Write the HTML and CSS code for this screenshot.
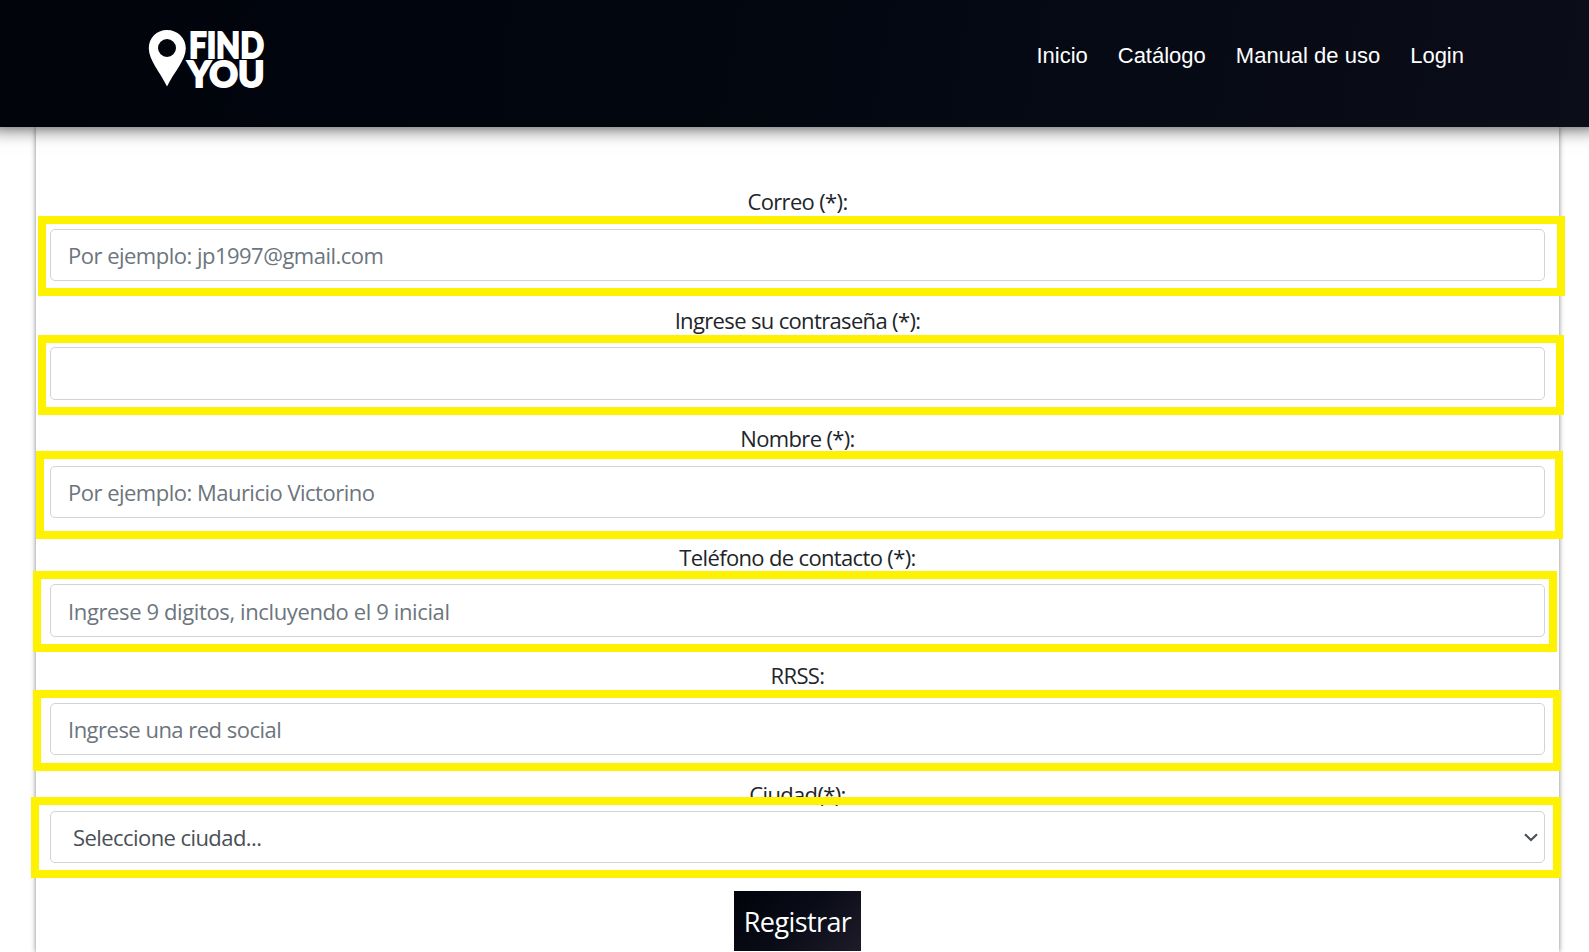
FILE: index.html
```html
<!DOCTYPE html>
<html lang="es">
<head>
<meta charset="utf-8">
<title>Find You - Registro</title>
<link rel="stylesheet" href="styles.css">
</head>
<body>
<header class="header">
  <a class="logo" href="#">
    <svg width="118" height="62" viewBox="0 0 118 62" fill="#fff">
      <path fill-rule="evenodd" d="M19 2C8.500 2 .8 10 .8 20.200C.8 32 12 44 19 58.500C26 44 37.800 32 37.800 20.200C37.800 10 29.500 2 19 2ZM19 11A9 9 0 1 1 19 29A9 9 0 1 1 19 11Z"/>
      <g class="logo-text">
        <text y="29.500" x="41" textLength="75" lengthAdjust="spacingAndGlyphs">FIND</text>
        <text y="58.500" x="39.500" textLength="77" lengthAdjust="spacingAndGlyphs">YOU</text>
      </g>
    </svg>
  </a>
  <nav class="nav">
    <a href="#">Inicio</a>
    <a href="#">Catálogo</a>
    <a href="#">Manual de uso</a>
    <a href="#">Login</a>
  </nav>
</header>
<main class="card">
  <form class="form">
    <div class="group"><label class="label">Correo (*):</label><input class="control" placeholder="Por ejemplo: jp1997@gmail.com"></div>
    <div class="group"><label class="label">Ingrese su contraseña (*):</label><input class="control" type="password"></div>
    <div class="group"><label class="label">Nombre (*):</label><input class="control" placeholder="Por ejemplo: Mauricio Victorino"></div>
    <div class="group"><label class="label">Teléfono de contacto (*):</label><input class="control control-phone" placeholder="Ingrese 9 digitos, incluyendo el 9 inicial"></div>
    <div class="group"><label class="label">RRSS:</label><input class="control" placeholder="Ingrese una red social"></div>
    <div class="group group-city"><label class="label">Ciudad(*):</label>
      <div class="control select"><span>Seleccione ciudad...</span>
        <svg width="14" height="9" viewBox="0 0 14 9" fill="none" stroke="#495057" stroke-width="2.200"><path d="M1 1.300L7 7L13 1.300"/></svg>
      </div>
    </div>
    <button class="submit" type="button">Registrar</button>
  </form>
</main>
<div class="mark mark-1"></div>
<div class="mark mark-2"></div>
<div class="mark mark-3"></div>
<div class="mark mark-4"></div>
<div class="mark mark-5"></div>
<div class="mark mark-6"></div>
</body>
</html>
```
FILE: styles.css
```css
* { box-sizing: border-box; }
html, body { height: 952px; overflow: hidden; }
body {
  margin: 0;
  position: relative;
  background: #fff;
  color: #212529;
  font-family: "Open Sans", "Noto Sans", sans-serif;
}
.header {
  position: relative;
  z-index: 2;
  height: 127px;
  padding: 28px 125px 0 148px;
  display: flex;
  justify-content: space-between;
  align-items: flex-start;
  background: linear-gradient(100deg, #01040b 0%, #02060f 45%, #060a15 70%, #0b0d18 100%);
  box-shadow: 0 -12px 18px 12px rgba(0, 0, 0, .8);
}
.logo { display: block; height: 62px; }
.logo svg { overflow: visible; }
.logo-text { font: 900 36.500px Lato, sans-serif; stroke: #fff; stroke-width: 1.900px; }
.nav { display: flex; gap: 30px; padding-top: 15px; }
.nav a {
  color: #fff;
  font: 22px/26px "Liberation Sans", Arial, sans-serif;
  text-decoration: none;
}
.card {
  height: 825px;
  margin: 0 30px 0 36px;
  padding: 61px 14px 0;
  background: #fff;
  box-shadow: 0 0 5px rgba(0, 0, 0, .5);
  clip-path: inset(0 -10px);
}
.form { display: flex; flex-direction: column; align-items: stretch; }
.group { display: flex; flex-direction: column; gap: 14.5px; margin-bottom: 25.5px; }
.label {
  font-size: 22px;
  line-height: 26px;
  text-align: center;
  letter-spacing: -.65px;
}
.control {
  width: 100%;
  height: 52.5px;
  margin: 0;
  padding: 1px 17px 0;
  border: 1px solid #ced4da;
  border-radius: 5px;
  background: #fff;
  color: #495057;
  font: 22px "Open Sans", "Noto Sans", sans-serif;
  letter-spacing: -.51px;
}
.control-phone { letter-spacing: -.38px; }
.control::placeholder { color: #6c757d; opacity: 1; }
.group-city { gap: 4px; margin-bottom: 27.5px; }
.select { display: flex; align-items: center; justify-content: space-between; padding: 1px 6px 0 22px; letter-spacing: -.57px; }
.submit {
  align-self: center;
  width: 127px;
  height: 60px;
  padding: 2px 0 0;
  border: 0;
  background: linear-gradient(135deg, #01030a 0%, #090c17 50%, #1f1b2a 100%);
  color: #fff;
  font: 27px "Open Sans", "Noto Sans", sans-serif;
  letter-spacing: -.6px;
}
/* Highlight frames drawn over the form fields */
.mark { position: absolute; z-index: 3; border: 8px solid #fff200; pointer-events: none; }
.mark-1 { left: 38px; top: 216px; width: 1527px; height: 80px; }
.mark-2 { left: 38px; top: 335px; width: 1526px; height: 80px; }
.mark-3 { left: 36px; top: 451px; width: 1527px; height: 88px; }
.mark-4 { left: 33px; top: 571px; width: 1524px; height: 81px; }
.mark-5 { left: 33px; top: 690px; width: 1528px; height: 81px; }
.mark-6 { left: 31px; top: 797px; width: 1530px; height: 81px; }
```
